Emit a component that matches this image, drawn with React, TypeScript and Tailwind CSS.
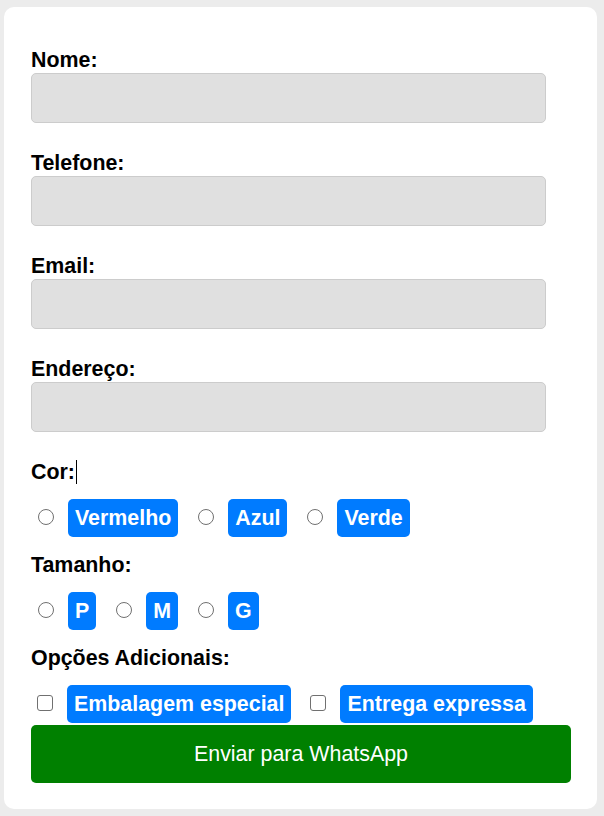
import React from "react";

const fields = ["Nome:", "Telefone:", "Email:", "Endereço:"];

function Chip({ children }: { children: React.ReactNode }) {
  return (
    <span className="h-[38px] px-[7px] flex items-center rounded-[5px] bg-[#007bff] text-white font-bold text-[21.4px] leading-[24px] whitespace-nowrap">
      {children}
    </span>
  );
}

function Radio({ name }: { name: string }) {
  return (
    <input
      type="radio"
      name={name}
      className="appearance-none w-[16px] h-[16px] mb-[3px] rounded-full border border-[#707070] bg-white shrink-0"
    />
  );
}

function Check() {
  return (
    <input
      type="checkbox"
      className="appearance-none w-[16px] h-[16px] mb-[2px] rounded-[3px] border border-[#707070] bg-white shrink-0"
    />
  );
}

export default function App() {
  return (
    <div className="min-h-[816px] w-[604px] bg-[#ececec] pt-[7px] pl-[4px] font-['Liberation_Sans',Arial,sans-serif]">
      <form className="w-[593px] bg-white rounded-[10px] pt-[41px] pb-[26px] pl-[27px] pr-[26px]">
        {fields.map((f) => (
          <div key={f}>
            <label className="block text-[21.4px] leading-[24px] font-bold text-black mb-[1px]">{f}</label>
            <input
              type="text"
              className="block w-[515px] h-[50px] mb-[28px] bg-[#e0e0e0] border border-[#cccccc] rounded-[5px]"
            />
          </div>
        ))}

        <div className="text-[21.4px] leading-[24px] font-bold text-black flex items-center">
          Cor:<span className="inline-block w-px h-[24px] bg-black ml-px" />
        </div>
        <div className="flex items-center mt-[15px] pl-[7px]">
          <Radio name="cor" />
          <span className="ml-[14px]"><Chip>Vermelho</Chip></span>
          <span className="ml-[20px] flex items-center"><Radio name="cor" /></span>
          <span className="ml-[14px]"><Chip>Azul</Chip></span>
          <span className="ml-[20px] flex items-center"><Radio name="cor" /></span>
          <span className="ml-[14px]"><Chip>Verde</Chip></span>
        </div>

        <div className="mt-[16px] text-[21.4px] leading-[24px] font-bold text-black">Tamanho:</div>
        <div className="flex items-center mt-[15px] pl-[7px]">
          <Radio name="tam" />
          <span className="ml-[14px]"><Chip>P</Chip></span>
          <span className="ml-[20px] flex items-center"><Radio name="tam" /></span>
          <span className="ml-[14px]"><Chip>M</Chip></span>
          <span className="ml-[20px] flex items-center"><Radio name="tam" /></span>
          <span className="ml-[14px]"><Chip>G</Chip></span>
        </div>

        <div className="mt-[16px] text-[21.4px] leading-[24px] font-bold text-black">Opções Adicionais:</div>
        <div className="flex items-center mt-[15px] pl-[6px]">
          <Check />
          <span className="ml-[14px]"><Chip>Embalagem especial</Chip></span>
          <span className="ml-[19px] flex items-center"><Check /></span>
          <span className="ml-[14px]"><Chip>Entrega expressa</Chip></span>
        </div>

        <button
          type="button"
          className="mt-[2px] w-[540px] h-[58px] bg-[#008000] text-white text-[21.4px] rounded-[5px] flex items-center justify-center"
        >
          Enviar para WhatsApp
        </button>
      </form>
    </div>
  );
}
